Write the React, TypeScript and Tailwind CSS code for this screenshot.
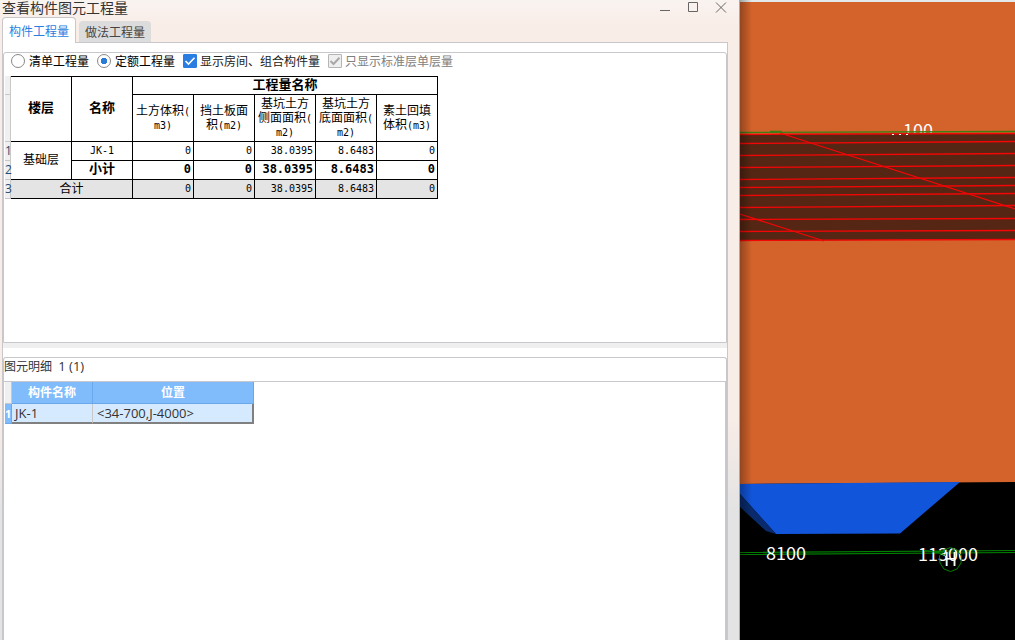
import { useState } from 'react';
import clsx from 'clsx';

const COLUMNS = [
  ['土方体积(', 'm3)'],
  ['挡土板面', '积(m2)'],
  ['基坑土方', '侧面面积(', 'm2)'],
  ['基坑土方', '底面面积(', 'm2)'],
  ['素土回填', '体积(m3)'],
];

const VALUES = ['0', '0', '38.0395', '8.6483', '0'];

const HATCH = [
  [143, 141], [155, 153], [167, 165], [179, 177], [187, 185],
  [195, 193], [207, 205], [219, 218], [231, 230], [240, 239],
];

const cell = 'border-r border-b border-black whitespace-nowrap';
const gutter = 'border-r border-b border-[#c8c8c8] bg-[#f0f0f0] p-0 text-left font-normal text-[#224a75] font-["Open_Sans","Noto_Sans_CJK_SC",sans-serif]';

function Mono({ text }: { text: string }) {
  return (
    <>
      {text.split(/([\x21-\x7e]+)/).map((part, i) => (
        i % 2 ? <span key={i} className="text-[10px]">{part}</span> : part
      ))}
    </>
  );
}

function TitleBar() {
  const btn = 'grid size-[14px] place-items-center text-[#666]';
  return (
    <header className="flex h-[17px] items-start pl-0.5 pr-[11px]">
      <h1 className="text-sm leading-[15px] text-[#333]">查看构件图元工程量</h1>
      <div className="ml-auto flex gap-3.5 text-[#555]">
        <button aria-label="最小化" className={btn}>
          <svg width="14" height="14" fill="none" stroke="currentColor"><path d="M2 10.5h10" /></svg>
        </button>
        <button aria-label="最大化" className={btn}>
          <svg width="14" height="14" fill="none" stroke="currentColor"><path d="M2.5 2.5h9v9h-9z" /></svg>
        </button>
        <button aria-label="关闭" className={btn}>
          <svg width="14" height="14" fill="none" stroke="currentColor"><path d="M2 2.5l10 10M12 2.5l-10 10" /></svg>
        </button>
      </div>
    </header>
  );
}

function Radio({ label, checked, onChange }: { label: string; checked: boolean; onChange: () => void }) {
  return (
    <label className="flex items-center gap-1 text-black">
      <input
        type="radio" name="quantity" checked={checked} onChange={onChange}
        className="size-3.5 appearance-none rounded-full border border-[#888] bg-white checked:bg-[radial-gradient(circle,#2a7ad8_3px,#fff_3.5px)]"
      />
      {label}
    </label>
  );
}

function Check({ label, disabled }: { label: string; disabled?: boolean }) {
  return (
    <label className={clsx('flex items-center gap-[3px]', disabled ? 'text-[#808080]' : 'text-[#222]')}>
      <span className="grid">
        <input
          type="checkbox" defaultChecked disabled={disabled}
          className="peer col-start-1 row-start-1 size-3.5 appearance-none rounded-[1px] border border-[#999] bg-white checked:border-[#2a7de1] checked:bg-[#2a7de1] disabled:border-[#b5b5b5] disabled:bg-[#efefef]"
        />
        <svg
          viewBox="0 0 14 14" fill="none" stroke={disabled ? '#a8a8a8' : '#fff'} strokeWidth={disabled ? 2 : 1.6}
          className="pointer-events-none col-start-1 row-start-1 hidden size-3.5 peer-checked:block"
        >
          <path d="M2.5 7l3 3L11.5 3.8" />
        </svg>
      </span>
      {label}
    </label>
  );
}

function Numbers({ className }: { className: string }) {
  return VALUES.map((v, i) => (
    <td key={i} className={clsx(cell, 'pr-[2px] text-right', className)}>{v}</td>
  ));
}

function QuantityTable() {
  return (
    <table className='ml-px w-[433px] table-fixed border-separate border-spacing-0 text-xs leading-[14px] text-black font-["DejaVu_Sans_Mono","Noto_Sans_CJK_SC",monospace]'>
      <colgroup>
        <col className="w-[6px]" />
        {Array.from({ length: 7 }, (_, i) => <col key={i} className="w-[61px]" />)}
      </colgroup>
      <thead>
        <tr className="h-[19px]">
          <th className={gutter} />
          <th rowSpan={2} className={clsx(cell, 'border-t p-0 pb-[3px] text-[13px]')}>楼层</th>
          <th rowSpan={2} className={clsx(cell, 'border-t p-0 pb-[3px] text-[13px]')}>名称</th>
          <th colSpan={5} className={clsx(cell, 'border-t p-0 pb-[2px] text-[13px]')}>工程量名称</th>
        </tr>
        <tr className="h-[47px]">
          <th className={gutter} />
          {COLUMNS.map((lines, i) => (
            <th key={i} className={clsx(cell, 'p-0 pb-px font-normal')}>
              {lines.map(l => <div key={l} className="h-[14px]"><Mono text={l} /></div>)}
            </th>
          ))}
        </tr>
      </thead>
      <tbody>
        <tr className="h-[19px]">
          <th className={gutter}>1</th>
          <td rowSpan={2} className={clsx(cell, 'p-0 pb-[2px] text-center')}>基础层</td>
          <td className={clsx(cell, 'p-0 text-center text-[10px]')}>JK-1</td>
          <Numbers className="py-0 pl-0 text-[10px]" />
        </tr>
        <tr className="h-[19px] font-bold">
          <th className={gutter}>2</th>
          <td className={clsx(cell, 'p-0 pb-[2px] text-center text-[13px]')}>小计</td>
          <Numbers className="pt-0 pb-[2px] pl-0" />
        </tr>
        <tr className="h-[19px] bg-[#e4e4e4]">
          <th className={gutter}>3</th>
          <td colSpan={2} className={clsx(cell, 'p-0 text-center')}>合计</td>
          <Numbers className="py-0 pl-0 text-[10px]" />
        </tr>
      </tbody>
    </table>
  );
}

function DetailTable() {
  const head = 'border-r border-b border-[#69a8ea] bg-[#80bcfc] p-0 text-xs leading-[21px] text-white';
  const data = 'border-b-2 border-b-[#808080] bg-[#d6eaff] py-0 pr-0 text-left';
  return (
    <table className='ml-px w-[249px] table-fixed border-separate border-spacing-0 text-[13px] leading-[18px] text-[#333] font-["Open_Sans","Noto_Sans_CJK_SC",sans-serif]'>
      <colgroup>
        <col className="w-[7px]" />
        <col className="w-[81px]" />
        <col className="w-[161px]" />
      </colgroup>
      <thead>
        <tr>
          <th className="border-r border-b border-[#c8c8c8] bg-[#f0f0f0] p-0" />
          <th className={head}>构件名称</th>
          <th className={head}>位置</th>
        </tr>
      </thead>
      <tbody>
        <tr>
          <th className="border-r border-b border-[#69a8ea] bg-[#80bcfc] p-0 text-left text-[11px] text-white">1</th>
          <td className={clsx(data, 'border-r border-r-[#c8c8c8] pl-[3px]')}>JK-1</td>
          <td className={clsx(data, 'border-r-2 border-r-[#808080] pl-1')}>&lt;34-700,J-4000&gt;</td>
        </tr>
      </tbody>
    </table>
  );
}

function QuantityWindow() {
  const [tab, setTab] = useState('构件工程量');
  const [mode, setMode] = useState('定额工程量');

  return (
    <section className="flex min-w-0 flex-col border-r border-[#aaa] bg-[linear-gradient(#f9f3f0,#f9ede7_4%,#f9ede7_65%,#e3e3e3_80%)]">
      <TitleBar />
      <div role="tablist" className="flex items-end gap-[3px] pl-0.5">
        {['构件工程量', '做法工程量'].map(name => (
          <button
            key={name} role="tab" aria-selected={tab === name} onClick={() => setTab(name)}
            className={clsx(
              'rounded-t-[4px] px-1.5 text-xs',
              tab === name
                ? 'relative -mb-px h-[26px] border border-b-0 border-[#c8c8cc] bg-white text-[#2a7de1]'
                : 'h-[21px] bg-[#dcdcdc] text-[#444]',
            )}
          >
            {name}
          </button>
        ))}
      </div>
      <div className="ml-0.5 mr-[11px] flex min-h-0 flex-1 flex-col border-t border-r border-l border-[#c8c8cc] bg-white">
        <div className="flex min-h-0 flex-[291] flex-col pt-[9px]">
          <div className="min-h-0 flex-1 rounded-t-[3px] border border-[#c8c8cc]">
            <div className="flex h-[23px] items-center gap-2 pb-[7px] pl-[7px] text-xs leading-[14px]">
              {['清单工程量', '定额工程量'].map(name => (
                <Radio key={name} label={name} checked={mode === name} onChange={() => setMode(name)} />
              ))}
              <Check label="显示房间、组合构件量" />
              <Check label="只显示标准层单层量" disabled />
            </div>
            <QuantityTable />
          </div>
        </div>
        <div className="h-[5px] bg-[#efefef]" />
        <div className="mt-[9px] flex min-h-0 flex-[282] flex-col rounded-t-[3px] border border-b-0 border-[#c8c8cc]">
          <h2 className='h-[23px] whitespace-pre text-xs leading-[16px] text-[#333] font-["Open_Sans","Noto_Sans_CJK_SC",sans-serif]'>图元明细  <span className="text-[13px]">1 (1)</span></h2>
          <div className="flex-1 border-t border-r border-[#c8c8cc]">
            <DetailTable />
          </div>
        </div>
      </div>
    </section>
  );
}

function Scene() {
  return (
    <section className="relative min-w-0 overflow-hidden bg-black">
      <svg viewBox="0 0 275 640" preserveAspectRatio="xMinYMin slice" className='size-full font-["Noto_Sans_CJK_SC",sans-serif]'>
        <path d="M0 0H275V482L0 484Z" fill="#d4632b" />
        <path d="M0 0H275V2H0Z" fill="#e3e9ea" />
        <text x="163" y="137" fontSize="18" fill="#fff">100</text>
        <path d="M0 134L275 133V239L0 241Z" fill="#552613" />
        <g fill="none" stroke="#f40606" strokeWidth="1.3">
          <path d="M0 134.5L275 133.5" />
          {HATCH.map(([a, b]) => <path key={a} d={`M0 ${a + 0.5}L275 ${b + 0.5}`} />)}
          <path d="M40 133L275 209M0 214L84 241" />
        </g>
        <path d="M0 132.5L275 131.5M30 131.5h12" stroke="#3f7d14" strokeWidth="1.3" />
        <path d="M152 134.5h2m5 0h2m5 0h2" stroke="#fff" />

        <path d="M0 484L220 482L160 533.5L36 534L0 494Z" fill="#1155da" />
        <path d="M0 494L36 534L26 531L0 507Z" fill="#092b6d" />

        <path d="M0 552.5L275 550.5M0 554.5L275 552.5" stroke="#008000" strokeWidth="1.2" />
        <g fontSize="18" fill="#fff">
          <text x="26" y="560">8100</text>
          <text x="178" y="561">113000</text>
          <text x="204" y="566">H</text>
        </g>
        <path d="M210.500 547.500L217 550L221.500 556L221 563L217 569L210.500 571.500L204 569L200 563L199.500 556L204 550Z" fill="none" stroke="#008200" />
        <path d="M184 550.500l14 2 8 3M194 552l10-1" fill="none" stroke="#008200" />
      </svg>
      <div className="absolute inset-y-0 left-0 w-3 bg-linear-to-r from-black/30 to-transparent" />
    </section>
  );
}

export default function App() {
  return (
    <main className='grid h-screen grid-cols-[minmax(0,740fr)_minmax(0,275fr)] overflow-hidden font-["Noto_Sans_CJK_SC",sans-serif]'>
      <QuantityWindow />
      <Scene />
    </main>
  );
}
